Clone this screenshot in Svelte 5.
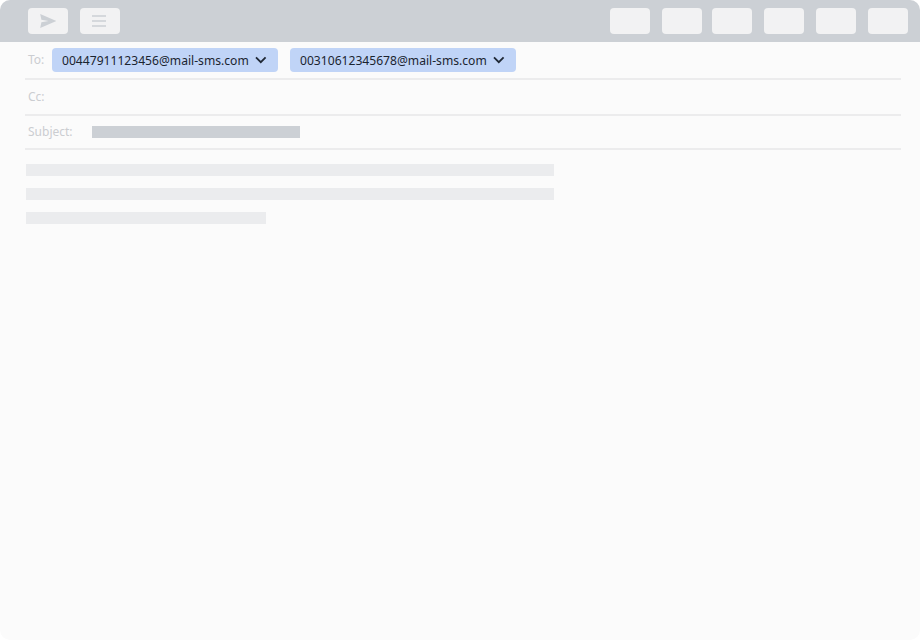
<script lang="ts">
  const recipients = ["00447911123456@mail-sms.com", "00310612345678@mail-sms.com"];
  const rightButtons = [0, 1, 2, 3, 4, 5];
</script>

<div class="window">
  <header class="toolbar">
    <div class="group">
      <button class="tool" type="button" aria-label="Send">
        <svg width="17" height="14" viewBox="0 0 17 14" aria-hidden="true">
          <path d="M0.2 0 L16.4 7 L0.2 14 L1.4 8.2 L8.5 7 L1.4 5.8 Z" fill="#ccd0d5" />
        </svg>
      </button>
      <button class="tool menu" type="button" aria-label="Menu">
        <svg width="14" height="12" viewBox="0 0 14 12" aria-hidden="true">
          <path d="M0 1h14M0 6h14M0 11h14" stroke="#ccd0d5" stroke-width="1.7" fill="none" />
        </svg>
      </button>
    </div>
    <div class="group right">
      {#each rightButtons as b (b)}
        <button class="tool" type="button" aria-label="Action {b + 1}"></button>
      {/each}
    </div>
  </header>

  <section class="fields">
    <div class="row to">
      <span class="label">To:</span>
      <div class="chips">
        {#each recipients as address (address)}
          <div class="chip">
            <span>{address}</span>
            <svg width="12" height="8" viewBox="0 0 12 8" aria-hidden="true">
              <path d="M1 1.4 L5.8 6.2 L10.6 1.4" stroke="#1f2835" stroke-width="1.8" fill="none" />
            </svg>
          </div>
        {/each}
      </div>
    </div>
    <div class="row cc">
      <span class="label">Cc:</span>
    </div>
    <div class="row subject">
      <span class="label">Subject:</span>
      <div class="subject-bar"></div>
    </div>
  </section>

  <section class="body">
    <div class="line"></div>
    <div class="line"></div>
    <div class="line short"></div>
  </section>
</div>

<style>
  :global(body) {
    background: #fff;
  }

  .window {
    width: 920px;
    height: 640px;
    background: #fbfbfb;
    border-radius: 10px;
    overflow: hidden;
    font-family: "Noto Sans", sans-serif;
  }

  .toolbar {
    height: 42px;
    box-sizing: border-box;
    padding: 8px 12px 8px 28px;
    background: #ccd0d5;
    display: flex;
    justify-content: space-between;
  }

  .group {
    display: flex;
    gap: 12px;
  }

  .right .tool:nth-child(2) {
    margin-right: -2px;
  }

  .tool {
    width: 40px;
    height: 26px;
    padding: 0;
    border: none;
    border-radius: 4px;
    background: #f2f2f3;
    display: flex;
    align-items: center;
    justify-content: center;
  }

  .menu svg {
    margin-right: 2px;
  }

  .fields {
    margin: 0 19px 0 25px;
  }

  .row {
    display: flex;
    align-items: center;
    box-sizing: border-box;
    border-bottom: 2px solid #ececed;
    padding-left: 3px;
  }

  .to {
    height: 38px;
  }

  .cc {
    height: 36px;
  }

  .subject {
    height: 34px;
  }

  .label {
    margin-bottom: 2px;
    font-size: 12px;
    color: #cbcdd1;
  }

  .to .label {
    width: 24px;
  }

  .subject .label {
    width: 64px;
  }

  .chips {
    display: flex;
    gap: 12px;
  }

  .chip {
    width: 226px;
    height: 24px;
    box-sizing: border-box;
    padding: 0 11px 0 10px;
    border-radius: 4px;
    background: #c0d4f7;
    color: #1b2430;
    font-size: 12.12px;
    display: flex;
    align-items: center;
    justify-content: space-between;
  }

  .subject-bar {
    width: 208px;
    height: 12px;
    background: #ccd0d5;
  }

  .body {
    padding: 14px 0 0 26px;
    display: flex;
    flex-direction: column;
    gap: 12px;
  }

  .line {
    width: 528px;
    height: 12px;
    background: #ebecee;
  }

  .line.short {
    width: 240px;
  }
</style>
